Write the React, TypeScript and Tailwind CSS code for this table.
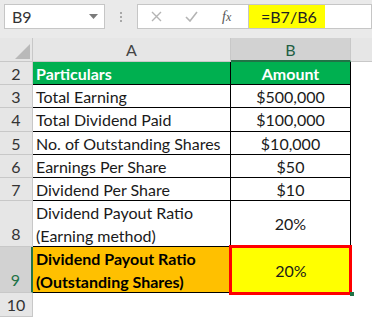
import React from "react";

const rows = [
  { n: "2", h: "h-[23px]", a: "Particulars", b: "Amount", kind: "head" },
  { n: "3", h: "h-[23px]", a: "Total Earning", b: "$500,000" },
  { n: "4", h: "h-[24px]", a: "Total Dividend Paid", b: "$100,000" },
  { n: "5", h: "h-[23px]", a: "No. of Outstanding Shares", b: "$10,000" },
  { n: "6", h: "h-[23px]", a: "Earnings Per Share", b: "$50" },
  { n: "7", h: "h-[23px]", a: "Dividend Per Share", b: "$10" },
  { n: "8", h: "h-[46px]", a: "Dividend Payout Ratio\n(Earning method)", b: "20%", tall: true },
];

function RowHeader({ n, h, tall, active }: { n: string; h: string; tall?: boolean; active?: boolean }) {
  return (
    <div
      className={`${h} w-[33px] shrink-0 flex justify-center border-b border-[#c8c8c8] ${
        active
          ? "bg-[#d2d2d2] border-r-2 border-r-[#217346] text-[#217346]"
          : "bg-[#e6e6e6] border-r border-r-[#c8c8c8] text-[#333]"
      } ${tall ? "items-end pb-[1px]" : "items-center"}`}
    >
      {n}
    </div>
  );
}

export default function App() {
  return (
    <div className="w-[372px] h-[317px] overflow-hidden bg-white text-[16px] leading-[23px] text-[#1a1a1a] font-['Lato','Liberation_Sans',sans-serif]">
      {/* formula bar */}
      <div className="h-[38px] bg-[#eaeaea] flex items-start pt-[4px]">
        <div className="ml-[4px] w-[101px] h-[25px] bg-white border border-[#c6c6c6] flex items-center justify-between pl-[7px] pr-[6px] text-[#333]">
          <span>B9</span>
          <svg width="9" height="5" viewBox="0 0 9 5">
            <path d="M0 0h9L4.5 5z" fill="#7a7a7a" />
          </svg>
        </div>
        <div className="w-[32px] h-[25px] flex flex-col items-center justify-center gap-[2px]">
          <span className="w-[2px] h-[2px] bg-[#a8a8a8]" />
          <span className="w-[2px] h-[2px] bg-[#a8a8a8]" />
          <span className="w-[2px] h-[2px] bg-[#a8a8a8]" />
        </div>
        <div className="w-[112px] h-[25px] bg-white border border-[#c6c6c6] flex items-center">
          <svg className="ml-[13px]" width="11" height="11" viewBox="0 0 11 11">
            <path d="M1 1l9 9M10 1l-9 9" stroke="#b4b4b4" strokeWidth="1.4" />
          </svg>
          <svg className="ml-[23px]" width="13" height="11" viewBox="0 0 13 11">
            <path d="M1 6l4 4 7-9" stroke="#b4b4b4" strokeWidth="1.6" fill="none" />
          </svg>
          <span className="ml-[24px] font-['Liberation_Serif',serif] italic text-[14px] text-[#555]">
            f<span className="text-[12px]">x</span>
          </span>
        </div>
        <div className="flex-1 h-[25px] bg-white border border-l-0 border-[#c6c6c6] flex">
          <div className="w-[76px] h-full bg-[#ffff00] pl-[12px] flex items-center text-[#222]">=B7/B6</div>
        </div>
      </div>

      {/* column headers */}
      <div className="flex h-[24px] bg-[#e6e6e6] text-[#444]">
        <div className="w-[33px] shrink-0 border-r border-b border-[#c8c8c8] relative">
          <svg className="absolute right-[2px] bottom-[2px]" width="15" height="15" viewBox="0 0 15 15">
            <path d="M15 0v15H0z" fill="#b9b9b9" />
          </svg>
        </div>
        <div className="w-[198px] shrink-0 border-r border-b border-[#c8c8c8] flex items-center justify-center">A</div>
        <div className="w-[120px] shrink-0 bg-[#d2d2d2] border-r border-[#c8c8c8] border-b-2 border-b-[#217346] flex items-center justify-center text-[#1f5f44]">
          B
        </div>
        <div className="flex-1 border-b border-[#c8c8c8]" />
      </div>

      {rows.map((r) => (
        <div key={r.n} className="flex">
          <RowHeader n={r.n} h={r.h} tall={r.tall} />
          <div
            className={`${r.h} w-[198px] shrink-0 border-r border-b border-black pl-[3px] whitespace-pre-line ${
              r.kind === "head" ? "bg-[#00b050] text-white font-bold" : ""
            } ${r.tall ? "" : "flex items-center"}`}
          >
            {r.a}
          </div>
          <div
            className={`${r.h} w-[120px] shrink-0 border-r border-b border-black flex items-center justify-center ${
              r.kind === "head" ? "bg-[#00b050] text-white font-bold" : ""
            }`}
          >
            {r.b}
          </div>
        </div>
      ))}

      {/* row 9 */}
      <div className="flex">
        <RowHeader n="9" h="h-[46px]" tall active />
        <div className="h-[46px] w-[198px] shrink-0 border-r border-b border-black bg-[#ffc000] font-bold pl-[3px] text-black">
          Dividend Payout Ratio
          <br />
          (Outstanding Shares)
        </div>
        <div className="h-[46px] w-[120px] shrink-0 relative bg-[#ffff00] flex items-center justify-center">
          20%
          <div className="absolute -left-[2px] -top-[2px] -right-[1px] bottom-[-2px] border-[3px] border-[#ff0000]" />
          <div className="absolute -right-[3px] -bottom-[3px] w-[4px] h-[4px] bg-[#217346]" />
        </div>
      </div>

      {/* row 10 */}
      <div className="flex">
        <RowHeader n="10" h="h-[24px]" />
      </div>
    </div>
  );
}
